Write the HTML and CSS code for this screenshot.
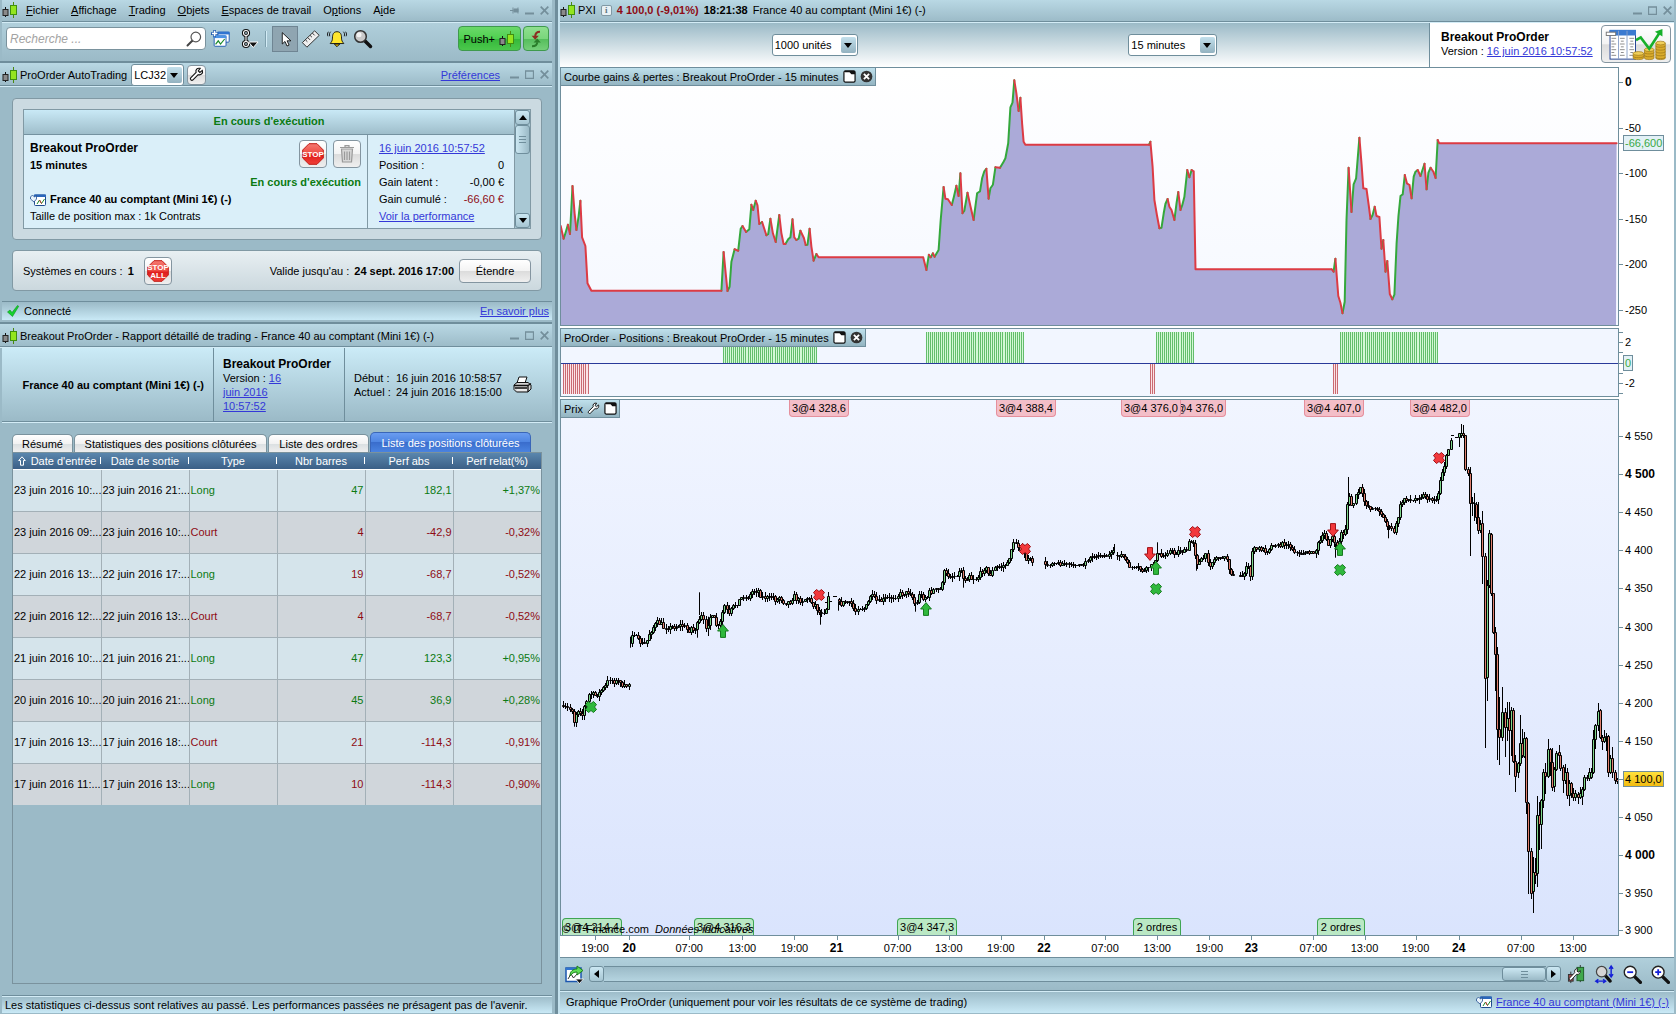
FILE: index.html
```html
<!DOCTYPE html>
<html lang="fr">
<head>
<meta charset="utf-8">
<title>ProOrder AutoTrading</title>
<link rel="stylesheet" href="styles.css">
</head>
<body>
<svg class="defs" width="0" height="0" aria-hidden="true">
  <defs>
    <linearGradient id="gRed" x1="0" y1="0" x2="0" y2="1"><stop offset="0" stop-color="#f47a72"/><stop offset=".5" stop-color="#ee4840"/><stop offset=".55" stop-color="#e01c1c"/><stop offset="1" stop-color="#f04038"/></linearGradient>
    <linearGradient id="gPrice" x1="0" y1="0" x2="0" y2="1"><stop offset="0" stop-color="#f1f5ff"/><stop offset="1" stop-color="#dae4fd"/></linearGradient>
    <linearGradient id="gGain" x1="0" y1="0" x2="0" y2="1"><stop offset="0" stop-color="#ffffff"/><stop offset="1" stop-color="#f5f8ff"/></linearGradient>
    <symbol id="i-candles" viewBox="0 0 16 16"><path d="M3.5 5v10" stroke="#111"/><rect x="1" y="7.500" width="5" height="6" fill="#8a8a8a" stroke="#222"/><path d="M11.500 0v16" stroke="#4a8a10"/><rect x="8.500" y="3.500" width="6" height="9" fill="#93e51f" stroke="#3f8f12"/></symbol>
    <symbol id="i-min" viewBox="0 0 9 9"><path d="M0 7.500h9" stroke="#748f9b" stroke-width="2"/></symbol>
    <symbol id="i-max" viewBox="0 0 9 9"><path d="M.5 1h8v7.500h-8z M0 1h9" fill="none" stroke="#748f9b" stroke-width="1.300"/></symbol>
    <symbol id="i-close" viewBox="0 0 9 9"><path d="M.7.7l7.600 7.600M8.300.7L.7 8.300" stroke="#748f9b" stroke-width="1.700"/></symbol>
    <symbol id="i-wrench" viewBox="0 0 16 16"><path d="M14.200 3.600l-2.600 2.200-1.700-1.600 2-2.700C8.700.6 6.600 3.300 7.600 5.800L1.800 11.700c-1 1.200.9 3.200 2.200 2.200l5.800-5.700c3 1 5.400-1.500 4.400-4.600z" fill="#fff" stroke="#111" stroke-width="1.200"/></symbol>
    <symbol id="i-win" viewBox="0 0 14 14"><rect x="1" y="1" width="12" height="12" rx="1.500" fill="#fff" stroke="#111" stroke-width="1.300"/><path d="M6 1h7v3.500H9L7 2.500H2V1z" fill="#111"/></symbol>
    <symbol id="i-x" viewBox="0 0 14 14"><circle cx="7" cy="7" r="6.300" fill="#333"/><path d="M4.200 4.200l5.600 5.600M9.800 4.200l-5.600 5.600" stroke="#fff" stroke-width="2"/></symbol>
    <symbol id="i-ws" viewBox="0 0 22 20"><rect x="7.500" y="2.500" width="12.500" height="11" rx="1" fill="#fff" stroke="#1b56ae"/><path d="M7 2h13.500v3H7z" fill="#2f74d0"/><rect x="3.500" y="6.500" width="13" height="11.500" rx="1" fill="#fff" stroke="#1b56ae"/><path d="M3 6h14v3H3z" fill="#4b93e6"/><path d="M5 16l3-4 2.500 3.500L15 10" fill="none" stroke="#1a8a2a" stroke-width="1.300"/><path d="M4 0v8M0 4h8" stroke="#1b56ae" stroke-width="3"/><path d="M4 1v6M1 4h6" stroke="#fff" stroke-width="1.600"/></symbol>
    <symbol id="i-minichart" viewBox="0 0 16 12"><rect x="4.500" y="1" width="11" height="10.500" rx="1" fill="#fff" stroke="#1f4b8e"/><path d="M4 .5h12V3H4z" fill="#2a66bb"/><path d="M7 10l2.500-4 2 3.500L14.500 5" fill="none" stroke="#1a8a2a"/><path d="M9.500 6l2 3.500" stroke="#c33"/><path d="M.5 3l2-2 2 2 2-1.500V5L4 8 .5 5z" fill="#e8f3fb" stroke="#1f4b8e" stroke-width=".8"/></symbol>
    <symbol id="i-octagon" viewBox="0 0 22 22"><path d="M7 .7h8L21.300 7v8L15 21.300H7L.7 15V7z" fill="url(#gRed)" stroke="#c11a14"/></symbol>
    <symbol id="i-cross" viewBox="0 0 12 12"><path d="M3.500.5L6 2.500 8.500.5l3 3L9.500 6l2 2.500-3 3L6 9.500l-2.500 2-3-3L2.500 6l-2-2.500z" stroke-width="1"/></symbol>
    <symbol id="i-arrow" viewBox="0 0 12 14"><path d="M6 .6L11.400 7H8.500v6.400h-5V7H.6z" stroke-width="1"/></symbol>
    <symbol id="i-lens" viewBox="0 0 18 18"><path d="M10.500 10.500l6 6" stroke="#111" stroke-width="3.200" stroke-linecap="round"/><circle cx="6.800" cy="6.800" r="5.600" fill="#fff" stroke="#222" stroke-width="1.300"/></symbol>
  </defs>
</svg>

<div class="desk">
  <div class="side">
    <header class="bar menubar">
      <svg class="logo"><use href="#i-candles"/></svg>
      <nav class="menu" aria-label="Menu principal">
        <a href="#"><u>F</u>ichier</a><a href="#"><u>A</u>ffichage</a><a href="#"><u>T</u>rading</a><a href="#"><u>O</u>bjets</a><a href="#"><u>E</u>spaces de travail</a><a href="#">O<u>p</u>tions</a><a href="#">A<u>i</u>de</a>
      </nav>
      <div class="winbtns">
        <button type="button" aria-label="Épingler"><svg viewBox="0 0 9 9"><path d="M0 4.500h3M3 1.500v6M3.500 4.500h4M4 3h4v3H4zM8 1.500v6" stroke="#748f9b" fill="#748f9b"/></svg></button>
        <button type="button" aria-label="Réduire"><svg><use href="#i-min"/></svg></button>
        <button type="button" aria-label="Fermer"><svg><use href="#i-close"/></svg></button>
      </div>
    </header>

    <div class="toolbar">
      <label class="search">
        <input type="search" placeholder="Recherche ..." aria-label="Recherche">
        <svg viewBox="0 0 16 16"><path d="M6.500 9.500l-5 5" stroke="#444" stroke-width="2" stroke-linecap="round"/><circle cx="9.800" cy="6" r="4.800" fill="#fff" stroke="#555" stroke-width="1.200"/></svg>
      </label>
      <button type="button" class="tool tool-gap" aria-label="Nouvel espace"><svg viewBox="0 0 22 20"><use href="#i-ws"/></svg></button>
      <button type="button" class="tool tool-gap" aria-label="Lier"><svg viewBox="0 0 18 20"><g fill="none" stroke="#111" stroke-width="3.200"><circle cx="6" cy="4" r="2.500"/><circle cx="6" cy="15" r="2.500"/><path d="M6 6v7"/></g><g fill="none" stroke="#fff" stroke-width="1.100"><circle cx="6" cy="4" r="2.500"/><circle cx="6" cy="15" r="2.500"/><path d="M6 6v7"/></g><path d="M8.500 13h9.500l-4.700 5.500z" fill="#111" stroke="#fff"/></svg></button>
      <span class="sep"></span>
      <button type="button" class="tool pressed" aria-label="Curseur" aria-pressed="true"><svg viewBox="0 0 22 20"><path d="M8 3v12.500l3-2.800 2.200 5 2.300-1-2.200-4.700h4.200z" fill="#fff" stroke="#111"/></svg></button>
      <button type="button" class="tool" aria-label="Règle"><svg viewBox="0 0 22 20"><path d="M1.500 14L15 1l5 5L6.500 19z" fill="#efefef" stroke="#222"/><path d="M5 11l2 2M7.500 8.500l2.500 2.500M10 6l2 2M12.500 3.500L15 6" stroke="#222"/></svg></button>
      <button type="button" class="tool" aria-label="Alertes"><svg viewBox="0 0 22 20"><path d="M11 2c-4 0-5 3-5 7 0 3-1 4-2.500 6h15C17 13 16 12 16 9c0-4-1-7-5-7z" fill="#ffe62e" stroke="#111"/><path d="M8 15.500h6l-3 3z" fill="#e8b800" stroke="#111"/><path d="M4 2C2.500 3.500 2.500 5 3 7M1.500 2C.3 4 .3 5 1 7M18 2c1.500 1.500 1.500 3 1 5M20.500 2c1.200 2 1.200 3 .5 5" fill="none" stroke="#111"/></svg></button>
      <button type="button" class="tool" aria-label="Zoom"><svg viewBox="0 0 20 20"><path d="M11 11l6.500 6.500" stroke="#111" stroke-width="3.500" stroke-linecap="round"/><circle cx="7.500" cy="7.500" r="5.800" fill="#c9c9c9" stroke="#333" stroke-width="1.500"/><circle cx="6" cy="5.800" r="2.500" fill="#f2f2f2"/></svg></button>
      <button type="button" class="push">Push+ <svg><use href="#i-candles"/></svg></button>
      <button type="button" class="push push-alt" aria-label="Synchroniser"><svg viewBox="0 0 18 20"><path d="M14 1c-5 0-6 3-6 6" fill="none" stroke="#8c2e22" stroke-width="2.500"/><path d="M3.500 6h9L8 11z" fill="#8c2e22"/><path d="M4 19c5 0 6.500-2.500 6.500-5" fill="none" stroke="#2a7d2a" stroke-width="2.500"/><path d="M6 14.500h9L10.500 9.500z" fill="#2a7d2a"/></svg></button>
    </div>

    <div class="bar titlebar">
      <svg class="logo"><use href="#i-candles"/></svg>
      <span class="bar-title">ProOrder AutoTrading</span>
      <span class="combo combo-account"><select aria-label="Compte"><option>LCJ32</option></select></span>
      <button type="button" class="btn btn-wrench" aria-label="Configurer"><svg><use href="#i-wrench"/></svg></button>
      <a href="#" class="push-right">Préférences</a>
      <div class="winbtns">
        <button type="button" aria-label="Réduire"><svg><use href="#i-min"/></svg></button>
        <button type="button" aria-label="Agrandir"><svg><use href="#i-max"/></svg></button>
        <button type="button" aria-label="Fermer"><svg><use href="#i-close"/></svg></button>
      </div>
    </div>

    <section class="card systems">
      <div class="list">
        <div class="list-main">
          <h2 class="list-head">En cours d'exécution</h2>
          <div class="list-row">
            <div class="sys">
              <div class="sys-top">
                <div><strong class="name">Breakout ProOrder</strong><strong>15 minutes</strong></div>
                <div class="sys-btns">
                  <button type="button" class="btn btn-sq" aria-label="Arrêter"><svg viewBox="0 0 22 22"><use href="#i-octagon"/><text x="11" y="14" class="stop">STOP</text></svg></button>
                  <button type="button" class="btn btn-sq" aria-label="Supprimer" disabled><svg viewBox="0 0 22 22"><path d="M5.500 6h11l-1 13h-9zM8.500 8.500v8.500M11 8.500v8.500M13.500 8.500v8.500M4 4.500h14M9 4V2.500h4V4" fill="#d8d8d8" stroke="#9a9a9a" stroke-width="1.200"/></svg></button>
                </div>
              </div>
              <strong class="state">En cours d'exécution</strong>
              <strong class="market"><svg><use href="#i-minichart"/></svg>France 40 au comptant (Mini 1€) (-)</strong>
              <span>Taille de position max : 1k Contrats</span>
            </div>
            <dl class="perf">
              <dt><a href="#">16 juin 2016 10:57:52</a></dt><dd></dd>
              <dt>Position :</dt><dd>0</dd>
              <dt>Gain latent :</dt><dd>-0,00 €</dd>
              <dt>Gain cumulé :</dt><dd class="neg">-66,60 €</dd>
              <dt><a href="#">Voir la performance</a></dt><dd></dd>
            </dl>
          </div>
        </div>
        <div class="vscroll">
          <button type="button" aria-label="Monter"><svg viewBox="0 0 8 5"><path d="M4 0l4 5H0z"/></svg></button>
          <span class="vthumb"></span>
          <button type="button" class="last" aria-label="Descendre"><svg viewBox="0 0 8 5"><path d="M0 0h8L4 5z"/></svg></button>
        </div>
      </div>
    </section>

    <section class="card running">
      <span>Systèmes en cours : <strong>1</strong></span>
      <button type="button" class="btn btn-sq" aria-label="Tout arrêter"><svg viewBox="0 0 22 22"><use href="#i-octagon"/><text x="11" y="10" class="stop">STOP</text><text x="11" y="18" class="stop">ALL</text></svg></button>
      <span class="push-right">Valide jusqu'au : <strong>24 sept. 2016 17:00</strong></span>
      <button type="button" class="btn btn-extend">Étendre</button>
    </section>

    <div class="status">
      <span class="conn"><svg viewBox="0 0 12 12"><path d="M.5 7L3 5l2 2.500L10.500.5l1.200.8L5.500 11.500z" fill="#14d32c" stroke="#0a8f1c" stroke-width=".6"/></svg>Connecté</span>
      <a href="#">En savoir plus</a>
    </div>

    <div class="bar titlebar report-title">
      <svg class="logo"><use href="#i-candles"/></svg>
      <span class="bar-title">Breakout ProOrder - Rapport détaillé de trading - France 40 au comptant (Mini 1€) (-)</span>
      <div class="winbtns">
        <button type="button" aria-label="Réduire"><svg><use href="#i-min"/></svg></button>
        <button type="button" aria-label="Agrandir"><svg><use href="#i-max"/></svg></button>
        <button type="button" aria-label="Fermer"><svg><use href="#i-close"/></svg></button>
      </div>
    </div>

    <div class="report">
      <div class="rep-a"><strong>France 40 au comptant (Mini 1€) (-)</strong></div>
      <div class="rep-b"><strong class="name">Breakout ProOrder</strong><span class="ver">Version : <a href="#">16 juin 2016 10:57:52</a></span></div>
      <div class="rep-c">
        <dl><dt>Début :</dt><dd>16 juin 2016 10:58:57</dd><dt>Actuel :</dt><dd>24 juin 2016 18:15:00</dd></dl>
        <button type="button" class="bare" aria-label="Imprimer"><svg viewBox="0 0 19 17"><path d="M6 1h8l-2 6H4z" fill="#fff" stroke="#111"/><path d="M1 9l3-2.500h11L18 9v4l-3 3H3.500L1 13.500z" fill="#d5d5d5" stroke="#111"/><path d="M1 9.500h14L18 7.500M15 10v6M2 12h12" fill="none" stroke="#111" stroke-width="1.300"/><path d="M4 14h10" stroke="#fff"/></svg></button>
      </div>
    </div>

    <section class="closed">
      <div class="tabs" role="tablist">
        <button type="button" role="tab" class="t1">Résumé</button><button type="button" role="tab" class="t2">Statistiques des positions clôturées</button><button type="button" role="tab" class="t3">Liste des ordres</button><button type="button" role="tab" class="active" aria-selected="true">Liste des positions clôturées</button>
      </div>
      <div class="table-box">
        <table>
          <thead><tr><th><svg viewBox="0 0 8 10"><path d="M4 .8L7.300 4.500H5.500v4.700h-3V4.500H.7z" fill="none" stroke="#fff"/></svg> Date d'entrée</th><th>Date de sortie</th><th>Type</th><th>Nbr barres</th><th>Perf abs</th><th>Perf relat(%)</th></tr></thead>
          <tbody>
            <tr><td>23 juin 2016 10:...</td><td>23 juin 2016 21:...</td><td class="pos">Long</td><td class="n pos">47</td><td class="n pos">182,1</td><td class="n pos">+1,37%</td></tr>
            <tr><td>23 juin 2016 09:...</td><td>23 juin 2016 10:...</td><td class="neg">Court</td><td class="n neg">4</td><td class="n neg">-42,9</td><td class="n neg">-0,32%</td></tr>
            <tr><td>22 juin 2016 13:...</td><td>22 juin 2016 17:...</td><td class="pos">Long</td><td class="n neg">19</td><td class="n neg">-68,7</td><td class="n neg">-0,52%</td></tr>
            <tr><td>22 juin 2016 12:...</td><td>22 juin 2016 13:...</td><td class="neg">Court</td><td class="n neg">4</td><td class="n neg">-68,7</td><td class="n neg">-0,52%</td></tr>
            <tr><td>21 juin 2016 10:...</td><td>21 juin 2016 21:...</td><td class="pos">Long</td><td class="n pos">47</td><td class="n pos">123,3</td><td class="n pos">+0,95%</td></tr>
            <tr><td>20 juin 2016 10:...</td><td>20 juin 2016 21:...</td><td class="pos">Long</td><td class="n pos">45</td><td class="n pos">36,9</td><td class="n pos">+0,28%</td></tr>
            <tr><td>17 juin 2016 13:...</td><td>17 juin 2016 18:...</td><td class="neg">Court</td><td class="n neg">21</td><td class="n neg">-114,3</td><td class="n neg">-0,91%</td></tr>
            <tr><td>17 juin 2016 11:...</td><td>17 juin 2016 13:...</td><td class="pos">Long</td><td class="n neg">10</td><td class="n neg">-114,3</td><td class="n neg">-0,90%</td></tr>
          </tbody>
        </table>
      </div>
    </section>

    <footer class="status side-foot">Les statistiques ci-dessus sont relatives au passé. Les performances passées ne présagent pas de l'avenir.</footer>
  </div>

  <main class="main">
    <header class="bar chart-title">
      <svg class="logo"><use href="#i-candles"/></svg>
      <span>PXI</span><span class="info">i</span>
      <strong class="neg">4 100,0 (-9,01%)</strong><strong>18:21:38</strong><span>France 40 au comptant (Mini 1€) (-)</span>
      <div class="winbtns">
        <button type="button" aria-label="Réduire"><svg><use href="#i-min"/></svg></button>
        <button type="button" aria-label="Agrandir"><svg><use href="#i-max"/></svg></button>
        <button type="button" aria-label="Fermer"><svg><use href="#i-close"/></svg></button>
      </div>
    </header>

    <div class="chart-tools">
      <div class="selects">
        <span class="combo combo-a"><select aria-label="Unités"><option>1000 unités</option></select></span>
        <span class="combo combo-b"><select aria-label="Période"><option>15 minutes</option></select></span>
      </div>
      <div class="strategy">
        <div><strong class="name">Breakout ProOrder</strong><span class="ver">Version : <a href="#">16 juin 2016 10:57:52</a></span></div>
        <button type="button" class="btn btn-report" aria-label="Rapport détaillé"><svg viewBox="0 0 68 36"><rect x="6.500" y="4" width="27" height="30" fill="#fff" stroke="#1d3d8f"/><path d="M6 3h28v6H6z" fill="#3a7ad0"/><path d="M15.500 4v30M24.500 4v30" stroke="#8aa0c8"/><path d="M8 12h5M8 15h3M8 18h5M8 21h3M8 24h5M8 27h3M8 30h5M17 12h5M18 15h3M17 18h5M18 21h3M17 24h5M18 27h3M17 30h5M27 12h5M28 15h3M27 18h5M28 21h3M27 24h5M28 27h3M27 30h5" stroke="#888"/><rect x="2.500" y="5.500" width="10" height="3.500" fill="#fff" stroke="#777"/><g fill="#d9ab2c" stroke="#9a7412" stroke-width=".7"><path d="M31 28h11v5c0 2-11 2-11 0zM43 24h10v9c0 2-10 2-10 0zM55 17h10v16c0 2-10 2-10 0z"/><g fill="#f0cf5a"><ellipse cx="36.500" cy="28" rx="5.500" ry="2"/><ellipse cx="48" cy="24" rx="5" ry="2"/><ellipse cx="60" cy="17" rx="5" ry="2"/></g><g fill="none"><path d="M31 31c0 2 11 2 11 0M43 27c0 2 10 2 10 0M43 30c0 2 10 2 10 0M55 20c0 2 10 2 10 0M55 23c0 2 10 2 10 0M55 26c0 2 10 2 10 0M55 29c0 2 10 2 10 0M55 32c0 2 10 2 10 0"/></g></g><path d="M34 14l5-3 9 12L59 6" fill="none" stroke="#16b02a" stroke-width="2.800"/><path d="M54 5l8-3v8z" fill="#16b02a"/></svg></button>
      </div>
    </div>

    <div class="charts">
      <div class="pane pane-gain">
        <div class="plot"><svg id="gain" viewBox="561 68 1057 257" preserveAspectRatio="none"></svg>
          <div class="label">Courbe gains &amp; pertes : Breakout ProOrder - 15 minutes <svg><use href="#i-win"/></svg><svg><use href="#i-x"/></svg></div>
        </div>
        <div class="yaxis" id="gain-axis"></div>
      </div>
      <div class="pane pane-pos">
        <div class="plot"><svg id="pos" viewBox="561 329 1057 67" preserveAspectRatio="none"></svg>
          <div class="label">ProOrder - Positions : Breakout ProOrder - 15 minutes <svg><use href="#i-win"/></svg><svg><use href="#i-x"/></svg></div>
        </div>
        <div class="yaxis" id="pos-axis"></div>
      </div>
      <div class="pane pane-price">
        <div class="plot"><svg id="price" viewBox="561 400 1057 535" preserveAspectRatio="none"></svg>
          <div class="label">Prix <svg class="w"><use href="#i-wrench"/></svg><svg><use href="#i-win"/></svg></div>
          <div id="tags"></div>
          <div class="mark">© IT-Finance.com&nbsp; <i>Données indicatives</i></div>
        </div>
        <div class="yaxis" id="price-axis"></div>
      </div>
      <div class="pane pane-time"><div class="xaxis" id="time-axis"></div></div>
    </div>

    <div class="nav">
      <button type="button" class="bare" aria-label="Exporter"><svg viewBox="0 0 19 19"><rect x="1" y="3" width="15" height="13.500" fill="#fff" stroke="#1b56ae" stroke-width="1.500"/><path d="M1 3h15v2H1z" fill="#2f74d0"/><path d="M3 14l3-5 2.500 4L13 8" fill="none" stroke="#333"/><path d="M5 11c0-5 3-7 7-7V1l6 4.500-6 4.500V7C9 7 7 8 5 11z" fill="#5fdc55" stroke="#1c7f1c"/><path d="M10.500 14h8L14.500 18.500z" fill="#111" stroke="#fff" stroke-width=".8"/></svg></button>
      <div class="hscroll">
        <button type="button" aria-label="Reculer"><svg viewBox="0 0 5 8"><path d="M5 0v8L0 4z"/></svg></button>
        <span class="track"><span class="hthumb"></span></span>
        <button type="button" aria-label="Avancer"><svg viewBox="0 0 5 8"><path d="M0 0v8l5-4z"/></svg></button>
      </div>
      <div class="nav-icons">
        <button type="button" class="bare" aria-label="Configurer"><svg viewBox="0 0 18 20"><path d="M3 7v12M13 0v18" stroke="#333"/><rect x=".5" y="10" width="5" height="7" fill="#9c4a4a" stroke="#333"/><rect x="9.500" y="2.500" width="7" height="14" fill="#3fa84c" stroke="#1d5c27"/><path d="M13 6l-2 1.500-1.500-1L10.500 4C7.500 3.500 6.300 6 7.200 8L1.500 14c-.6 1.200.8 2.500 2 1.800L9 9.800c2.500.8 4.300-1.300 4-3.800z" fill="#fff" stroke="#111" stroke-width=".9"/></svg></button>
        <button type="button" class="bare" aria-label="Ajuster"><svg viewBox="0 0 20 20"><path d="M9 9l7 8" stroke="#111" stroke-width="3.400" stroke-linecap="round"/><circle cx="7" cy="7" r="5.500" fill="#d5d5d5" stroke="#444" stroke-width="1.300"/><path d="M17 2v9M15 4l2-3 2 3M15 9.500l2 3 2-3M1.500 17h9M3.500 15L.8 17l2.700 2M8.500 15l2.700 2-2.700 2" fill="none" stroke="#1420d8" stroke-width="1.500"/></svg></button>
        <button type="button" class="bare" aria-label="Dézoomer"><svg viewBox="0 0 18 18"><use href="#i-lens"/><path d="M4 6.800h5.600" stroke="#1420d8" stroke-width="1.700"/></svg></button>
        <button type="button" class="bare" aria-label="Zoomer"><svg viewBox="0 0 18 18"><use href="#i-lens"/><path d="M4 6.800h5.600M6.800 4v5.600" stroke="#1420d8" stroke-width="1.700"/></svg></button>
      </div>
    </div>

    <footer class="status main-foot">
      <span>Graphique ProOrder (uniquement pour voir les résultats de ce système de trading)</span>
      <span class="market"><svg><use href="#i-minichart"/></svg><a href="#">France 40 au comptant (Mini 1€) (-)</a></span>
    </footer>
  </main>
</div>
<script src="charts.js"></script>
</body>
</html>
```
FILE: styles.css
```css
* { box-sizing: border-box; }
html, body { height: 100%; }
body {
  margin: 0;
  background: #9bbac7;
  color: #000;
  font: 11px/14px "Liberation Sans", Arial, sans-serif;
}
a { color: #3438d8; }
h2, dl, dd { margin: 0; }
button, input, select { font: inherit; color: inherit; }
button { padding: 0; border: 0; background: none; }
svg { display: block; overflow: visible; }
.defs { position: absolute; }
.name { font-size: 12px; }
.pos { color: #0b7a12; }
.neg { color: #8e0b14; }
.push-right { margin-left: auto; }

.desk {
  display: grid;
  grid-template-columns: 560px minmax(0, 1fr);
  min-height: 100vh;
}
.side {
  display: flex;
  flex-direction: column;
  padding: 0 6px 1px 2px;
  border-right: 2px solid #c5e2ee;
  box-shadow: inset -3px 0 0 #6f8e9c;
}
.main {
  display: flex;
  flex-direction: column;
  min-width: 0;
  padding: 0 2px 1px 0;
}

/* title bars */
.bar {
  display: flex;
  align-items: center;
  height: 23px;
  padding-bottom: 2px;
  background: linear-gradient(#b9d8e4, #9bbac7);
  border-bottom: 1px solid #d3ecf6;
  box-shadow: inset 0 -1px 0 #6f8e9c;
}
.logo { width: 16px; height: 16px; flex: none; }
.menu { display: flex; gap: 12px; margin-left: 8px; }
.menu a { color: #000; text-decoration: none; }
.winbtns { display: flex; gap: 6px; margin-left: auto; padding-right: 3px; }
.winbtns button, .winbtns svg { width: 9px; height: 9px; }
.titlebar { height: 26px; margin: 0 0 0 -2px; padding: 0 0 0 2px; border-top: 2px solid #6f8e9c; }
.titlebar .bar-title { margin-left: 2px; }
.titlebar .push-right + .winbtns { margin-left: 10px; }

/* toolbar */
.toolbar {
  display: flex;
  align-items: center;
  height: 38px;
  padding: 0 3px 7px 4px;
  background: linear-gradient(#b0cfdb, #9bbac7);
}
.search {
  display: flex;
  align-items: center;
  width: 200px;
  height: 23px;
  padding: 0 3px;
  background: #fff;
  border: 1px solid #7a929d;
  border-radius: 4px;
}
.search input { flex: 1; min-width: 0; padding: 0; border: 0; outline: 0; background: none; font-size: 12px; }
.search input::placeholder { color: #a3a3a3; font-style: italic; }
.search svg { width: 16px; height: 16px; }
.tool { display: flex; align-items: center; justify-content: center; width: 26px; height: 26px; }
.tool-gap { margin-left: 2px; }
.tool svg { width: 20px; height: 20px; }
.sep { width: 2px; height: 16px; margin: 0 5px 0 3px; border-left: 1px solid #7fa0ae; border-right: 1px solid #d3ecf6; }
.tool.pressed { background: #8fa5b1; border: 1px solid #6f8593; }
.push {
  display: flex;
  align-items: center;
  gap: 4px;
  height: 25px;
  margin-left: auto;
  padding: 0 5px;
  border: 1px solid #3f9a4d;
  border-radius: 4px;
  background: linear-gradient(#6bd86a, #4fd050 50%, #35b83b 52%, #4bc84c);
}
.push svg { width: 16px; height: 16px; }
.push-alt { margin-left: 2px; padding: 0 4px; background: linear-gradient(#8fdf8f, #7ad67c 50%, #55bd5c 52%, #74cf78); }

.combo { position: relative; display: block; height: 22px; }
.combo select {
  width: 100%;
  height: 100%;
  padding: 0 2px;
  border: 1px solid #6f8e9c;
  border-radius: 3px;
  background: #fff;
  appearance: none;
}
.combo::before, .combo::after { content: ""; position: absolute; pointer-events: none; }
.combo::before { top: 3px; right: 2px; bottom: 3px; width: 15px; border-radius: 2px; background: linear-gradient(#c3e0ec, #93b2c0); }
.combo::after { top: 9px; right: 6px; border: 4px solid transparent; border-top: 5px solid #000; border-bottom: 0; }
.combo-account { width: 53px; margin-left: 4px; }
.combo-account select { padding: 0 0 0 2px; }
.combo-a { width: 86px; }
.combo-b { width: 89px; }
.btn {
  display: flex;
  align-items: center;
  justify-content: center;
  border: 1px solid #8495a0;
  border-radius: 4px;
  background: linear-gradient(#fff, #f3f3f3 50%, #dcdcdc 52%, #efefef);
}
.btn-wrench { width: 19px; height: 20px; margin-left: 3px; }
.btn-wrench svg { width: 15px; height: 15px; }
.btn-sq { width: 28px; height: 28px; }
.btn-sq svg { width: 22px; height: 22px; }
.btn-extend { width: 72px; height: 24px; margin-left: 5px; }
.stop { fill: #fff; font-size: 8px; font-weight: bold; text-anchor: middle; }

/* running systems */
.card {
  margin: 0 10px;
  border: 1px solid #8199a4;
  border-radius: 4px;
}
.systems { margin-top: 11px; padding: 10px; background: #cbdae1; }
.list { display: flex; border: 1px solid #8199a4; background: #daeff9; }
.list-main { flex: 1; }
.list-head {
  height: 25px;
  font-size: 11px;
  line-height: 23px;
  text-align: center;
  color: #0b7a12;
  background: linear-gradient(#c9e9f6, #9fbecb);
  border-bottom: 1px solid #7592a0;
}
.list-row { display: flex; height: 93px; line-height: 17px; }
.sys { flex: 1; display: flex; flex-direction: column; padding: 5px 6px 0; }
.sys strong { display: block; }
.sys-top { display: flex; justify-content: space-between; height: 34px; }
.sys-btns { display: flex; gap: 6px; }
.state { text-align: right; color: #0b7a12; }
.market { display: flex; align-items: center; gap: 4px; }
.sys .market { display: flex; }
.market svg { width: 16px; height: 12px; }
.perf {
  display: grid;
  grid-template-columns: auto 1fr;
  grid-auto-rows: 17px;
  width: 147px;
  padding: 5px 10px 0 11px;
  border-left: 1px solid #8199a4;
  white-space: nowrap;
}
.perf dt:first-child, .perf dt:nth-of-type(5) { grid-column: 1 / 3; }
.perf dt:first-child + dd, .perf dd:last-child { display: none; }
.perf dd { text-align: right; }
.vscroll { display: flex; flex-direction: column; width: 16px; background: #a9c8d4; border-left: 1px solid #8199a4; }
.vscroll button, .hscroll button {
  display: flex;
  align-items: center;
  justify-content: center;
  width: 15px;
  height: 15px;
  border: 1px solid #6f8e9c;
  border-radius: 3px;
  background: linear-gradient(#cbe7f2, #a6c5d2);
}
.vscroll svg { width: 8px; height: 5px; }
.vthumb {
  width: 15px;
  height: 29px;
  border: 1px solid #6f8e9c;
  border-radius: 3px;
  background: repeating-linear-gradient(#6f8e9c 0 1px, transparent 1px 3px) center / 7px 7px no-repeat, linear-gradient(90deg, #cbe7f2, #9bbac7);
}
.vscroll .last { margin-top: auto; }

.running {
  display: flex;
  align-items: center;
  height: 41px;
  margin-top: 10px;
  padding: 0 10px;
  background: linear-gradient(#e8eff2, #cbd8de);
}
.running strong { margin-left: 2px; }
.running .btn-sq { margin-left: 10px; }
.status {
  display: flex;
  align-items: center;
  justify-content: space-between;
  height: 19px;
  margin-top: 10px;
  padding: 0 3px;
  border-top: 1px solid #6f8e9c;
  background: linear-gradient(#9bbac7, #c9e9f6);
}
.conn { display: flex; align-items: center; gap: 5px; padding-left: 2px; }
.conn svg { width: 12px; height: 12px; }

/* report */
.report-title { margin-top: 2px; }
.report {
  display: grid;
  grid-template-columns: 211px 131px 1fr;
  height: 74px;
  margin-bottom: 10px;
  border-bottom: 1px solid #6f8e9c;
  box-shadow: 0 1px 0 #d3ecf6;
  background: linear-gradient(#cbebf7, #9bbac7);
}
.report > div { display: flex; align-items: center; }
.report .rep-a { justify-content: flex-end; padding-right: 9px; white-space: nowrap; }
.report .rep-b { flex-direction: column; align-items: flex-start; justify-content: center; padding-left: 9px; border-left: 1px solid #6f8e9c; }
.rep-b .ver { width: 64px; }
.report .rep-c { padding-left: 9px; border-left: 1px solid #6f8e9c; }
.rep-c dl { display: grid; grid-template-columns: 42px auto; }
.rep-c button { margin-left: 11px; }
.bare svg { width: 19px; height: 19px; }

.closed { flex: 1; display: flex; flex-direction: column; margin: 0 10px; }
.tabs { display: flex; align-items: flex-end; gap: 1px; height: 20px; }
.tabs button {
  height: 18px;
  border: 1px solid #7a929d;
  border-bottom: 0;
  border-radius: 5px 5px 0 0;
  background: linear-gradient(#fff, #f2f2f2 50%, #dadfe1 52%, #eee);
}
.tabs .t1 { width: 61px; }
.tabs .t2 { width: 193px; }
.tabs .t3 { width: 101px; }
.tabs .active { width: 161px; height: 20px; color: #fff; border-color: #3a66b8; background: linear-gradient(#6a9cf0, #4f86e2 45%, #3a6dcc 50%, #4a83e0); }
.table-box { flex: 1; border: 1px solid #7a929d; }
table { width: 100%; border-collapse: collapse; table-layout: fixed; }
th { height: 16px; padding: 0; font-weight: normal; color: #fff; border-bottom: 1px solid #fff; background: linear-gradient(90deg, transparent calc(100% - 1px), #fff 0) 0 4px / 100% 7px no-repeat, linear-gradient(#5a86ad, #3b5f86); }
th:last-child { background: linear-gradient(#5a86ad, #3b5f86); }
th svg { display: inline-block; width: 8px; height: 10px; margin-right: 2px; vertical-align: -1px; }
td { height: 42px; padding: 0 1px; overflow: hidden; white-space: nowrap; border-right: 1px solid #a3b0b7; border-bottom: 1px solid #a3b0b7; }
td:last-child { border-right: 0; }
tr:last-child td { border-bottom: 0; }
tbody tr { background: #d5e4eb; }
tbody tr:nth-child(even) { background: #d0d6db; }
.n { text-align: right; }
.side-foot { height: 18px; margin-top: 11px; white-space: nowrap; box-shadow: inset 0 1px 0 #d3ecf6; }

/* chart window */
.chart-title { gap: 5px; }
.chart-title .logo { margin-right: -3px; }
.chart-title .winbtns { padding-right: 2px; }
.info { width: 11px; height: 11px; border: 1px solid #8199a4; border-radius: 2px; background: #e8f1f5; color: #5d7682; font: bold 9px/9px "Liberation Serif", serif; text-align: center; }
.chart-tools { display: flex; height: 44px; }
.selects { flex: 1; display: flex; align-items: center; justify-content: space-around; background: linear-gradient(#9bbac7, #fff); }
.chart-tools .selects { padding: 0 3%; }
.strategy { display: flex; align-items: center; justify-content: space-between; width: 245px; padding: 0 3px 2px 11px; border-left: 1px solid #6f8e9c; background: #fff; }
.chart-tools .selects { justify-content: space-between; padding: 0 19%; }
.strategy strong { display: block; }
.btn-report { width: 70px; height: 38px; }
.btn-report svg { width: 66px; height: 34px; }

.charts { flex: 1; display: flex; flex-direction: column; background: #fff; }
.pane { display: flex; }
.plot { position: relative; flex: 1; min-width: 0; border: 1px solid #6f8e9c; }
.plot > svg { position: absolute; width: 100%; height: 100%; overflow: hidden; }
.yaxis { position: relative; width: 55px; }
.pane-gain { flex: 259; }
.pane-pos { flex: 69; margin-top: 2px; }
.pane-price { flex: 537; margin-top: 2px; }
.pane-time { flex: none; height: 21px; padding-right: 55px; }
.xaxis { position: relative; flex: 1; }
.label {
  position: absolute;
  left: 0;
  top: 0;
  display: flex;
  align-items: center;
  gap: 4px;
  height: 18px;
  padding: 0 2px 0 3px;
  background: linear-gradient(#bfe0ec, #93b4c1);
  border: solid #6f8e9c;
  border-width: 0 1px 1px 0;
}
.label svg { width: 13px; height: 13px; }
.yaxis span { position: absolute; left: 6px; margin-top: -7px; white-space: nowrap; }
.yaxis i { position: absolute; left: 0; width: 4px; height: 1px; background: #6f8e9c; }
.yaxis .box { left: 4px; margin-top: -8px; padding: 0 1px; border: 1px solid #6f8e9c; background: #e3f1f6; color: #3aa845; }
.yaxis .last { background: linear-gradient(#ffe23c, #f2bb10); color: #000; }
.yaxis .big, .xaxis .big { font-size: 12px; font-weight: bold; }
.xaxis span { position: absolute; top: 5px; transform: translateX(-50%); }
.xaxis i { position: absolute; top: 0; width: 1px; height: 4px; background: #6f8e9c; }
.tag { position: absolute; width: 60px; height: 17px; line-height: 17px; text-align: center; white-space: nowrap; }
.tag.sell { top: 0; background: #f3bec8; border: 1px solid #e58f9c; border-top: 0; border-radius: 0 0 4px 4px; }
.tag.buy { bottom: 0; background: #bae8c4; border: 1px solid #3fa552; border-bottom: 0; border-radius: 4px 4px 0 0; }
.tag.orders { width: 48px; }
.mark { position: absolute; left: 1px; bottom: -1px; white-space: nowrap; }

/* bottom bars */
.nav { display: flex; align-items: center; height: 33px; padding: 0 4px 0 5px; border-top: 1px solid #6f8e9c; background: linear-gradient(#b0cfdb, #9bbac7); }
.hscroll { flex: 1; display: flex; margin: 0 6px 0 5px; }
.hscroll button { height: 16px; }
.hscroll svg { width: 5px; height: 8px; }
.track { flex: 1; display: flex; justify-content: flex-end; border: solid #6f8e9c; border-width: 1px 0; background: linear-gradient(#9bbac7, #b5d4e0); }
.hthumb { width: 44px; border: 1px solid #6f8e9c; border-radius: 3px; background: repeating-linear-gradient(#6f8e9c 0 1px, transparent 1px 3px) center / 7px 7px no-repeat, linear-gradient(#cbe7f2, #9bbac7); }
.nav-icons { display: flex; gap: 9px; }
.main-foot { height: 23px; margin: 0; padding: 0 5px 0 6px; box-shadow: inset 0 1px 0 #d3ecf6; }
```
FILE: charts.js
```js
const SHEETS = {
  L: { x: 555, kx: 2.8 },
  R: { x: 1115, kx: 2.795 }
};
const px = (s, v) => SHEETS[s].x + v / SHEETS[s].kx;
const py = v => 320 + v / 3;
const pairs = str => str.trim().split(/\s+/).map(p => p.split(',').map(Number));

// ---- gain / loss curve ----
const gainL = `16,678 24,716 29,700 36,674 42,702 49,558 55,640 60,690 66,650 71,602 76,712 85,738 91,850 102,872 466,872 472,756 478,820 483,873 489,860 494,785 503,748 513,752 520,686 525,678 535,696 544,688 550,614 555,630 562,602 567,616 572,672 580,666 592,706 597,702 603,656 610,700 618,726 628,645 634,700 640,732 645,732 653,718 659,712 665,658 670,712 676,720 682,716 687,692 697,714 702,735 707,734 713,686 718,740 724,782 732,762 738,772 1031,772 1040,810 1047,764 1052,772 1058,760 1063,770 1074,750 1080,660 1088,561 1093,596 1100,598 1111,615 1117,590 1124,557 1130,588 1135,520 1141,640 1146,632 1155,578 1163,618 1172,660 1182,580 1190,574 1196,535 1202,514 1208,506 1214,596 1219,565 1226,554 1233,502 1246,503 1256,485 1261,475 1269,430 1275,322 1281,308 1286,241 1292,280 1298,333 1303,293 1308,370 1312,425 1317,434`;
const gainR = `95,434 99,425 105,500 110,600 117,645 124,685 130,683 136,640 141,612 147,597 152,620 158,630 166,660 172,610 177,576 183,630 188,615 194,590 202,510 208,532 214,510 220,514 225,808 606,808 611,815 616,776 624,888 630,908 636,940 642,905 647,660 653,503 661,636 667,553 674,535 683,413 689,490 694,565 703,567 709,615 714,657 720,645 726,620 731,648 739,651 745,746 750,720 756,815 761,783 768,882 775,898 781,884 787,730 792,650 798,588 804,583 810,525 816,550 823,555 829,595 835,530 840,515 846,510 854,528 865,491 871,568 876,518 882,503 890,515 896,534 902,420 906,430 1402,430`;
const gain = pairs(gainL).map(([x, y]) => [px('L', x), y / 3])
  .concat(pairs(gainR).map(([x, y]) => [px('R', x), y / 3]));
const f = n => n.toFixed(1);
let area = 'M561,325';
gain.forEach(([x, y]) => { area += `L${f(x)},${f(y)}`; });
area += 'L1616,325Z';
const segs = { up: '', down: '' };
for (let i = 1; i < gain.length; i++) {
  const a = gain[i - 1], b = gain[i];
  segs[b[1] < a[1] - 0.1 ? 'up' : 'down'] += `M${f(a[0])},${f(a[1])}L${f(b[0])},${f(b[1])}`;
}
document.getElementById('gain').innerHTML =
  `<rect x="561" y="68" width="1057" height="257" fill="url(#gGain)"/><path d="${area}" fill="#abaad8"/>` +
  `<g fill="none" stroke-width="2" stroke-linecap="round"><path d="${segs.up}" stroke="#34a83c"/><path d="${segs.down}" stroke="#dc3b44"/></g>`;

// ---- positions ----
let pos = '<rect x="561" y="329" width="1057" height="67" fill="#f2f6ff"/>';
const stripes = (x0, x1, y0, y1, fill, line) => {
  pos += `<rect x="${x0}" y="${y0}" width="${x1 - x0}" height="${y1 - y0}" fill="${fill}"/>`;
  let d = '';
  for (let i = 0, x = x0; x <= x1; i++, x += i % 13 === 12 ? 3 : 2) d += `M${x + 0.5},${y0}V${y1}`;
  pos += `<path d="${d}" stroke="${line}"/>`;
};
stripes(723, 817, 332, 363, '#d3f8d6', '#63bd6c');
stripes(926, 1023, 332, 363, '#d3f8d6', '#63bd6c');
stripes(1156, 1193, 332, 363, '#d3f8d6', '#63bd6c');
stripes(1340, 1437, 332, 363, '#d3f8d6', '#63bd6c');
stripes(563, 589, 364, 394, '#fbe3e6', '#c96a72');
stripes(1150, 1154, 364, 394, '#fbe3e6', '#c96a72');
stripes(1333, 1338, 364, 394, '#fbe3e6', '#c96a72');
document.getElementById('pos').innerHTML = pos + '<path d="M561,363.5H1618" stroke="#2a3a9a"/>';

// ---- price candles ----
const runs = [
  ['L', '18,1155 24,1168 30,1162 40,1165 47,1170 52,1205 58,1180 64,1168 70,1172 75,1192 80,1160 86,1163 90,1125 100,1122 112,1124 122,1120 130,1108 140,1100 150,1075 158,1078 170,1085 182,1080 187,1105 195,1098 207,1090'],
  ['L', '210,968 213,940 222,938 228,955 240,968 250,970 256,962 262,940 275,920 286,905 297,910 303,920 320,922 340,918 350,914 365,922 372,932 380,920 388,932 398,912 410,888 416,905 424,925 432,888 445,895 455,925 466,900 472,852 480,870 486,885 496,860 510,848 520,832 540,832 552,812 570,812 577,828 600,835 607,825 620,842 630,828 642,848 660,842 668,825 677,840 697,838 706,832 720,850 730,855 738,877 757,870 763,818 768,845'],
  ['L', '789,838 795,850 810,845 825,850 833,850 838,880 846,860 855,862 866,865 876,850 880,825 892,830 903,845 920,836 945,832 962,822 980,818 992,812 1000,830 1010,860 1018,820 1030,830 1042,830 1046,815 1060,810 1078,808 1088,755 1098,765 1115,768 1130,757 1138,745 1142,775 1152,775 1158,757 1165,775 1180,775 1188,760 1205,740 1215,765 1232,742 1250,738 1268,730 1276,690 1287,665 1298,680 1310,690 1316,715 1340,725'],
  ['L', '1368,722 1372,737 1390,728 1410,728 1440,733 1478,735 1488,715 1510,705 1550,706 1566,695'],
  ['R', '0,705 16,703 25,710 38,740 60,742 83,752 98,735 103,750 110,715 120,700 130,710 150,690 165,700 180,690 198,695 206,665 220,665 226,730 240,720 255,705 263,735 280,712 300,712 312,715 318,745 333,775'],
  ['R', '343,768 355,768 362,745 372,742 378,770 382,690 400,685 425,690 435,675 455,675 475,668 490,678 512,702 530,695 558,697 566,672 585,640 598,675 605,640 612,670 620,685 630,640 642,640 647,560 654,530 662,560 672,530 683,502 695,540 712,565 735,565 748,590 765,620 780,635 790,590 797,555 810,530 830,545 845,528 870,525 877,540 900,535 908,480 914,455 923,425 932,385 940,345']
];
let seed = 7;
const rnd = () => (seed = (seed * 16807) % 2147483647) / 2147483647;
const candles = [];
const wicks = [];
runs.forEach(([s, str]) => {
  const p = pairs(str), end = p[p.length - 1][0];
  let open = p[0][1], k = 0;
  for (let x = p[0][0] + 5; x <= end + 1; x += 5.9) {
    while (k < p.length - 2 && p[k + 1][0] < x) k++;
    const a = p[k], b = p[k + 1];
    const steep = Math.abs(b[1] - a[1]) / (b[0] - a[0]);
    const flat = steep < 0.1 && b[0] - a[0] > 18;
    const close = a[1] + (b[1] - a[1]) * Math.min(1, (x - a[0]) / (b[0] - a[0])) + (rnd() - 0.5) * (flat ? 4 : 14);
    const reach = flat ? 7 : 12;
    candles.push([px(s, x), open, close, Math.min(open, close) - rnd() * reach, Math.max(open, close) + rnd() * reach]);
    open = close;
  }
});
// x, open, close, high, low
pairs(`961,350,340,340,378 968,345,338,312,350 974,338,345,316,350 979,345,448,345,450 986,448,460,442,465 991,458,550,440,705 997,545,548,530,585 1003,548,550,518,600 1009,552,590,545,610 1015,590,630,545,640 1021,630,612,600,635 1027,610,708,573,790 1033,708,1073,700,1280 1039,1070,795,780,1140 1045,795,640,630,800 1050,642,820,638,825 1056,820,935,818,940 1062,935,1003,920,1110 1068,1003,1226,980,1316 1074,1226,1252,1132,1332 1083,1252,1175,1100,1260 1089,1175,1220,1165,1307 1095,1220,1195,1147,1260 1101,1195,1230,1147,1362 1108,1230,1171,1160,1305 1113,1171,1323,1165,1325 1119,1323,1369,1305,1412 1125,1355,1330,1325,1370 1131,1330,1268,1186,1335 1137,1268,1305,1228,1310 1143,1308,1253,1235,1312 1148,1253,1445,1250,1480 1153,1448,1594,1445,1720 1162,1594,1718,1585,1735 1168,1712,1657,1610,1775 1174,1657,1665,1615,1690 1179,1660,1485,1428,1698 1185,1485,1512,1445,1588 1190,1512,1440,1438,1583 1197,1440,1355,1347,1460 1203,1355,1368,1330,1420 1209,1368,1288,1258,1370 1215,1288,1325,1285,1365 1221,1325,1400,1285,1410 1227,1397,1348,1340,1412 1233,1348,1298,1293,1350 1240,1295,1305,1275,1320 1245,1305,1345,1300,1350 1252,1340,1380,1335,1415 1257,1380,1355,1333,1390 1263,1355,1425,1345,1435 1269,1425,1390,1380,1455 1275,1390,1420,1385,1430 1281,1420,1432,1405,1440 1287,1432,1420,1410,1440 1293,1422,1432,1415,1450 1299,1432,1420,1400,1435 1304,1428,1408,1400,1452 1312,1408,1372,1365,1410 1318,1372,1375,1365,1380 1324,1375,1355,1345,1380 1330,1370,1355,1345,1375 1336,1355,1258,1230,1360 1342,1258,1215,1212,1285 1349,1215,1172,1150,1230 1355,1170,1250,1168,1255 1361,1250,1262,1245,1288 1367,1262,1250,1230,1265 1372,1247,1250,1240,1290 1378,1247,1355,1245,1368 1384,1355,1315,1305,1360 1390,1315,1355,1282,1370 1397,1355,1380,1350,1390 1402,1378,1382,1375,1390`)
  .forEach(c => candles.push([px('R', c[0]), c[1], c[2], c[3], c[4]]));
// isolated long shadows
[['L', '404,817,885 429,890,948 398,912,953 743,870,914 211,950,983 54,1190,1220 791,845,872 1009,850,875 1141,770,803 1564,672,700'],
 ['R', '116,667,710 225,720,752 652,471,540 762,610,655 616,670,713']]
  .forEach(([s, str]) => pairs(str).forEach(w => wicks.push([px(s, w[0]), w[1], w[2]])));

let shadow = '', up = '', down = '';
candles.forEach(([x, o, c, h, l]) => {
  const cx = Math.round(x), top = Math.round(py(Math.min(o, c))), bot = Math.max(top, Math.round(py(Math.max(o, c))));
  shadow += `M${cx + 0.5},${Math.round(py(h))}V${Math.round(py(l)) + 1}`;
  const box = `M${cx - 0.5},${top + 0.5}h2V${bot + 0.5}h-2z`;
  if (c < o) up += box; else down += box;
});
wicks.forEach(([x, h, l]) => { shadow += `M${Math.round(x) + 0.5},${f(py(h))}V${f(py(l))}`; });
// dashes for bars without trades
shadow += `M825,602.500h3M829,601.500h3M833,596.500h4M1451,435.500h3M1455,437.500h3`;

const icon = (id, x, y, fill, stroke, flip) => {
  const w = 12, h = id === 'i-arrow' ? 14 : 12;
  return `<g transform="translate(${x},${y})${flip ? ' rotate(180)' : ''}"><use href="#${id}" x="${-w / 2}" y="${-h / 2}" width="${w}" height="${h}" fill="${fill}" stroke="${stroke}"/></g>`;
};
const G = ['#2fb83c', '#177a20'], R = ['#f2383c', '#a01318'];
const marks = [
  icon('i-cross', 591, 707, ...G), icon('i-cross', 819, 595, ...R), icon('i-cross', 1025, 549, ...R),
  icon('i-arrow', 723, 631, ...G), icon('i-arrow', 926, 609, ...G),
  icon('i-cross', 1195, 532, ...R), icon('i-cross', 1439, 458, ...R),
  icon('i-arrow', 1150, 554, ...R, true), icon('i-arrow', 1333, 530, ...R, true),
  icon('i-arrow', 1156, 568, ...G), icon('i-arrow', 1340, 549, ...G),
  icon('i-cross', 1156, 589, ...G), icon('i-cross', 1340, 570, ...G)
];
document.getElementById('price').innerHTML =
  `<rect x="561" y="400" width="1057" height="535" fill="url(#gPrice)"/><path d="${shadow}" stroke="#000"/>` +
  `<path d="${up}" fill="#7ed68a" stroke="#000"/><path d="${down}" fill="#e0806f" stroke="#000"/>` + marks.join('');

// ---- order tags ----
const left = x => ((x - 561) / 1057 * 100).toFixed(2) + '%';
document.getElementById('tags').innerHTML =
  [[789, '3@4 328,6'], [996, '3@4 388,4'], [1166, '3@4 376,0'], [1121, '3@4 376,0'], [1304, '3@4 407,0'], [1410, '3@4 482,0']]
    .map(([x, t]) => `<span class="tag sell" style="left:${left(x)}">${t}</span>`).join('') +
  [[562, '3@4 214,4'], [694, '3@4 316,3'], [897, '3@4 347,3'], [1133, '2 ordres'], [1317, '2 ordres']]
    .map(([x, t]) => `<span class="tag buy${t[1] === ' ' ? ' orders' : ''}" style="left:${left(x)}">${t}</span>`).join('');

// ---- axes ----
const axis = (id, y0, h, ticks) => {
  document.getElementById(id).innerHTML = ticks.map(([y, t, cls]) => {
    const top = ((y - y0) / h * 100).toFixed(2) + '%';
    return `<i style="top:${top}"></i>` + (t ? `<span class="${cls || ''}" style="top:${top}">${t}</span>` : '');
  }).join('');
};
axis('gain-axis', 67, 259, [[82, '0', 'big'], [128, '-50'], [173, '-100'], [219, '-150'], [264, '-200'], [310, '-250'], [143, '-66,600', 'box']]);
axis('pos-axis', 328, 69, [[332], [342, '2'], [352], [363, '0', 'box'], [373], [383, '-2'], [393]]);
axis('price-axis', 399, 537, [[436, '4 550'], [474, '4 500', 'big'], [512, '4 450'], [550, '4 400'], [588, '4 350'], [627, '4 300'], [665, '4 250'], [703, '4 200'], [741, '4 150'], [779, '4 100,0', 'box last'], [817, '4 050'], [855, '4 000', 'big'], [893, '3 950'], [930, '3 900']]);
document.getElementById('time-axis').innerHTML =
  [[596, '19:00'], [630, '20'], [690, '07:00'], [743, '13:00'], [795, '19:00'], [837, '21'], [898, '07:00'], [949, '13:00'], [1001, '19:00'], [1044, '22'], [1105, '07:00'], [1157, '13:00'], [1209, '19:00'], [1251, '23'], [1313, '07:00'], [1364, '13:00'], [1415, '19:00'], [1458, '24'], [1520, '07:00'], [1572, '13:00']]
    .map(([x, t]) => `<i style="left:${left(x)}"></i><span class="${t.length === 2 ? 'big' : ''}" style="left:${left(x)}">${t}</span>`).join('');
```
